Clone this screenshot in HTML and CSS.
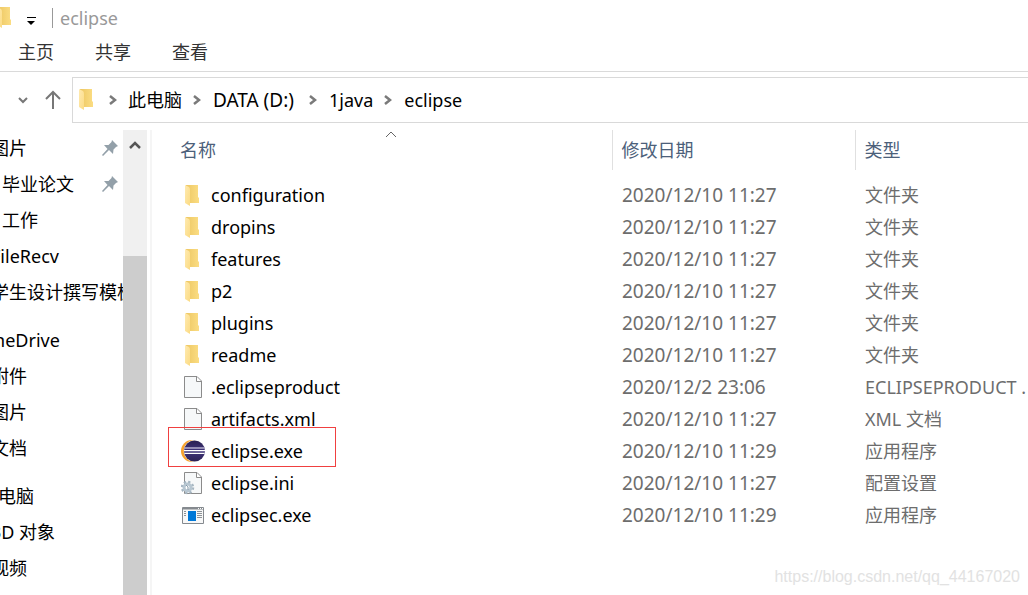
FILE: index.html
```html
<!DOCTYPE html>
<html lang="zh-CN">
<head>
<meta charset="utf-8">
<meta name="viewport" content="width=device-width, initial-scale=1">
<title>eclipse</title>
<link rel="stylesheet" href="styles.css">
</head>
<body>
<svg class="symbols" aria-hidden="true">
  <defs>
    <linearGradient id="fold-back" x1="0" y1="0" x2="1" y2="0"><stop offset="0" stop-color="#edc763"/><stop offset="1" stop-color="#fbdd83"/></linearGradient>
    <linearGradient id="fold-front" x1="0" y1="0" x2="1" y2="1"><stop offset="0" stop-color="#ffeab0"/><stop offset="1" stop-color="#fbdb84"/></linearGradient>
    <linearGradient id="globe" x1="0" y1="0" x2="0" y2="1"><stop offset="0" stop-color="#2a2050"/><stop offset="0.5" stop-color="#40357c"/><stop offset="1" stop-color="#2c2255"/></linearGradient>
    <symbol id="folder" viewBox="0 0 14 22">
      <path d="M1 0H13V12L14 13V18H4L1 16Z" fill="url(#fold-back)"/>
      <path d="M0 0L4 2Q5 3 5 5V21L0 18Z" fill="url(#fold-front)"/>
    </symbol>
    <symbol id="page" viewBox="0 0 18 22">
      <path d="M.5.5H13L17.500 5V21.500H.5Z" fill="#f6f8f9" stroke="#8b8b8b"/>
      <path d="M12.500 1V5.500H17" fill="#fff" stroke="#8b8b8b"/>
    </symbol>
    <symbol id="eclipse" viewBox="0 0 24 22">
      <circle cx="11" cy="11" r="11" fill="#f7a32e"/>
      <circle cx="13.800" cy="11" r="11" fill="#fff"/>
      <circle cx="13.500" cy="11" r="10.500" fill="url(#globe)"/>
      <path d="M3.500 8H23.500" stroke="#c9c3dc" stroke-width="1.300"/>
      <path d="M3 10.700H24M3.500 13.300H23.500" stroke="#fff" stroke-width="1.300"/>
    </symbol>
    <symbol id="settings" viewBox="0 0 21 23">
      <path d="M3.500.5H16L20.500 5V21.500H3.500Z" fill="#f6f8f9" stroke="#8b8b8b"/>
      <path d="M15.500 1V5.500H20" fill="#fff" stroke="#8b8b8b"/>
      <circle cx="6.500" cy="15.500" r="5.500" fill="none" stroke="#a5b5c1" stroke-width="2.500" stroke-dasharray="2.200 2.120"/>
      <circle cx="6.500" cy="15.500" r="3.500" fill="#fff" stroke="#b7c6d1" stroke-width="3"/>
      <path d="M5 13Q8 14 7 18" fill="none" stroke="#8196a6"/>
    </symbol>
    <symbol id="program" viewBox="0 0 22 17">
      <path d="M.5.5H21.500V16.500H.5Z" fill="#f8f8f8" stroke="#858a8f"/>
      <path d="M1 1.500H21" stroke="#858a8f" stroke-width="2"/>
      <path d="M16 1.500H17M18 1.500H19M20 1.500H21" stroke="#fff"/>
      <path d="M2 4.500H4M2 6.500H4M2 8.500H4M15 4.500H20M15 6.500H20M15 8.500H20M15 10.500H20" stroke="#8d9296"/>
      <path d="M6 4H14V14H6Z" fill="#0078d7"/>
    </symbol>
    <symbol id="pin" viewBox="0 0 16 16">
      <path d="M10 0L16 6L14 7L11.500 9.500L11 14L7 10L1 16L0 15L5.500 9L2 5L6.500 5L9.500 2Z" fill="#93a0a9"/>
    </symbol>
    <symbol id="next" viewBox="0 0 8 10">
      <path d="M1 1L6 5L1 9" fill="none" stroke="#7a7a7a" stroke-width="2.500"/>
    </symbol>
  </defs>
</svg>

<header class="titlebar">
  <svg class="folder title-folder"><use href="#folder"/></svg>
  <button class="plain quick" aria-label="自定义快速访问工具栏"><svg class="quick-icon" viewBox="0 0 10 9"><path d="M1 1.500H10" stroke="#000"/><path d="M1 5H9L5 9Z"/></svg></button>
  <span class="divider"></span>
  <h1 class="title">eclipse</h1>
</header>
<nav class="tabs">
  <button class="plain tab">主页</button>
  <button class="plain tab">共享</button>
  <button class="plain tab">查看</button>
</nav>
<div class="location">
  <button class="plain" aria-label="最近浏览的位置"><svg class="recent" viewBox="0 0 10 7"><path d="M1 1L5 5L9 1" fill="none" stroke="#777" stroke-width="2"/></svg></button>
  <button class="plain" aria-label="向上"><svg class="up" viewBox="0 0 16 20"><path d="M8 19V2M1 9L8 2L15 9" fill="none" stroke="#777" stroke-width="2"/></svg></button>
  <nav class="address">
    <svg class="folder"><use href="#folder"/></svg>
    <svg class="next first"><use href="#next"/></svg>
    <button class="plain">此电脑</button>
    <svg class="next"><use href="#next"/></svg>
    <button class="plain wide">DATA (D:)</button>
    <svg class="next"><use href="#next"/></svg>
    <button class="plain">1java</button>
    <svg class="next"><use href="#next"/></svg>
    <button class="plain">eclipse</button>
  </nav>
</div>

<main class="workspace">
  <aside class="sidebar">
    <ul class="tree">
      <li>图片<svg class="pin"><use href="#pin"/></svg></li>
      <li class="deep">毕业论文<svg class="pin"><use href="#pin"/></svg></li>
      <li class="deep">工作</li>
      <li>FileRecv</li>
      <li>学生设计撰写模板</li>
    </ul>
    <ul class="tree">
      <li class="root">OneDrive</li>
      <li>附件</li>
      <li>图片</li>
      <li>文档</li>
    </ul>
    <ul class="tree">
      <li class="root">此电脑</li>
      <li>3D 对象</li>
      <li>视频</li>
    </ul>
  </aside>
  <div class="scrollbar">
    <button class="plain scroll-up" aria-label="向上滚动"><svg class="scroll-icon" viewBox="0 0 12 10"><path d="M1 8L6 3L11 8" fill="none" stroke="#555" stroke-width="2.500"/></svg></button>
    <div class="thumb"></div>
  </div>
  <section class="files">
    <table class="list">
      <colgroup><col class="col-name"><col class="col-date"><col class="col-type"></colgroup>
      <thead><tr>
        <th>名称<svg class="sort" viewBox="0 0 12 7"><path d="M1 6L6 1L11 6" fill="none" stroke="#666"/></svg></th>
        <th>修改日期</th>
        <th>类型</th>
      </tr></thead>
      <tbody>
        <tr><td><div class="name"><span class="icon"><svg class="folder"><use href="#folder"/></svg></span>configuration</div></td><td class="wide">2020/12/10 11:27</td><td>文件夹</td></tr>
        <tr><td><div class="name"><span class="icon"><svg class="folder"><use href="#folder"/></svg></span>dropins</div></td><td class="wide">2020/12/10 11:27</td><td>文件夹</td></tr>
        <tr><td><div class="name"><span class="icon"><svg class="folder"><use href="#folder"/></svg></span>features</div></td><td class="wide">2020/12/10 11:27</td><td>文件夹</td></tr>
        <tr><td><div class="name"><span class="icon"><svg class="folder"><use href="#folder"/></svg></span>p2</div></td><td class="wide">2020/12/10 11:27</td><td>文件夹</td></tr>
        <tr><td><div class="name"><span class="icon"><svg class="folder"><use href="#folder"/></svg></span>plugins</div></td><td class="wide">2020/12/10 11:27</td><td>文件夹</td></tr>
        <tr><td><div class="name"><span class="icon"><svg class="folder"><use href="#folder"/></svg></span>readme</div></td><td class="wide">2020/12/10 11:27</td><td>文件夹</td></tr>
        <tr><td><div class="name"><span class="icon"><svg class="page"><use href="#page"/></svg></span>.eclipseproduct</div></td><td class="wide">2020/12/2 23:06</td><td>ECLIPSEPRODUCT .</td></tr>
        <tr><td><div class="name"><span class="icon"><svg class="page"><use href="#page"/></svg></span>artifacts.xml</div></td><td class="wide">2020/12/10 11:27</td><td>XML 文档</td></tr>
        <tr><td><div class="name"><span class="icon"><svg class="eclipse"><use href="#eclipse"/></svg></span>eclipse.exe<span class="highlight"></span></div></td><td class="wide">2020/12/10 11:29</td><td>应用程序</td></tr>
        <tr><td><div class="name"><span class="icon"><svg class="settings"><use href="#settings"/></svg></span>eclipse.ini</div></td><td class="wide">2020/12/10 11:27</td><td>配置设置</td></tr>
        <tr><td><div class="name"><span class="icon"><svg class="program"><use href="#program"/></svg></span>eclipsec.exe</div></td><td class="wide">2020/12/10 11:29</td><td>应用程序</td></tr>
      </tbody>
    </table>
  </section>
</main>
<span class="watermark">https://blog.csdn.net/qq_44167020</span>
</body>
</html>
```
FILE: styles.css
```css
* { box-sizing: border-box; }

body {
  margin: 0;
  height: 100vh;
  display: flex;
  flex-direction: column;
  position: relative;
  overflow: hidden;
  background: #fff;
  color: #000;
  font-family: "Noto Sans", "Noto Sans CJK SC", sans-serif;
  font-size: 18px;
  line-height: 24px;
}

svg { display: block; flex: none; }
.symbols { position: absolute; width: 0; height: 0; }

.plain {
  padding: 0;
  border: 0;
  background: none;
  color: inherit;
  font: inherit;
  white-space: nowrap;
}

.folder { width: 14px; height: 22px; }
.page { width: 18px; height: 22px; }
.eclipse { width: 24px; height: 22px; }
.settings { width: 21px; height: 23px; margin-right: 3px; }
.program { width: 22px; height: 17px; }
.pin { width: 16px; height: 16px; }
.next { width: 8px; height: 10px; margin: 0 12px 0 11px; }
.next.first { margin: 0 11px 0 16px; }

.titlebar {
  display: flex;
  align-items: center;
  height: 36px;
}
.title-folder { margin-left: -3px; }
.quick { margin: 4px 16px 0 15px; }
.quick-icon { width: 10px; height: 9px; }
.divider { width: 1px; height: 20px; background: #999; }
.title {
  margin: 0 0 0 7px;
  color: #999;
  font-size: 18px;
  font-weight: 400;
}
.wide { font-size: 19px; }

.tabs {
  display: flex;
  gap: 41px;
  height: 36px;
  padding: 4px 18px 0;
  align-items: flex-start;
  border-bottom: 1px solid #dadada;
  color: #333;
}

.location {
  display: flex;
  align-items: center;
  padding: 5px 0 7px 18px;
}
.recent { width: 10px; height: 7px; }
.up { width: 16px; height: 20px; margin: 0 11px 0 17px; }
.address {
  flex: 1;
  display: flex;
  align-items: center;
  height: 46px;
  padding-left: 6px;
  border: 1px solid #d9d9d9;
  border-right: 0;
}
.address .wide { margin-right: 4px; }

.workspace {
  flex: 1;
  min-height: 0;
  display: flex;
}

.sidebar {
  flex: none;
  width: 123px;
  display: flex;
  flex-direction: column;
  gap: 12px;
  overflow: hidden;
}
.tree { margin: 0; padding: 0; list-style: none; }
.tree li {
  display: flex;
  align-items: center;
  justify-content: space-between;
  height: 36px;
  margin-left: -9px;
  padding-right: 5px;
  white-space: nowrap;
}
.tree .deep { margin-left: 2px; }
.tree .root { margin-left: -20px; }

.scrollbar {
  flex: none;
  width: 24px;
  display: flex;
  flex-direction: column;
  background: #f0f0f0;
}
.scroll-up {
  display: grid;
  place-items: center;
  height: 30px;
  margin-bottom: 96px;
}
.scroll-icon { width: 12px; height: 10px; }
.thumb { flex: 1; background: #cdcdcd; }

.files {
  flex: 1;
  min-width: 0;
  margin-left: 3px;
  padding-left: 19px;
  border-left: 2px solid #f5f5f5;
  overflow: hidden;
}
.list {
  width: 100%;
  table-layout: fixed;
  border-collapse: collapse;
}
.col-name { width: 441px; }
.col-date { width: 243px; }
.list th {
  position: relative;
  height: 40px;
  padding: 0 9px;
  border-left: 1px solid #e0e0e0;
  color: #4c607a;
  font-weight: 400;
  text-align: left;
}
.list th:first-child { border-left: 0; }
.list tbody::before { content: ""; display: block; height: 9px; }
.list td {
  height: 32px;
  padding: 0 0 0 10px;
  color: #6d6d6d;
  overflow: hidden;
  white-space: nowrap;
}
.list td:first-child { color: #000; overflow: visible; }
.sort {
  position: absolute;
  top: 1px;
  left: calc(50% - 6px);
  width: 12px;
  height: 7px;
}
.name {
  position: relative;
  display: flex;
  align-items: center;
  height: 32px;
}
.icon {
  width: 24px;
  margin-right: 6px;
  display: grid;
  place-items: center;
}
.icon .folder { margin: 2px 2px 0 0; }
.highlight {
  position: absolute;
  top: -8px;
  left: -13px;
  width: 168px;
  height: 40px;
  border: 1px solid #f04040;
}

.watermark {
  position: absolute;
  right: 8px;
  bottom: 6px;
  color: #e2e2e2;
  font-family: "Liberation Sans", sans-serif;
  font-size: 16px;
}
```
